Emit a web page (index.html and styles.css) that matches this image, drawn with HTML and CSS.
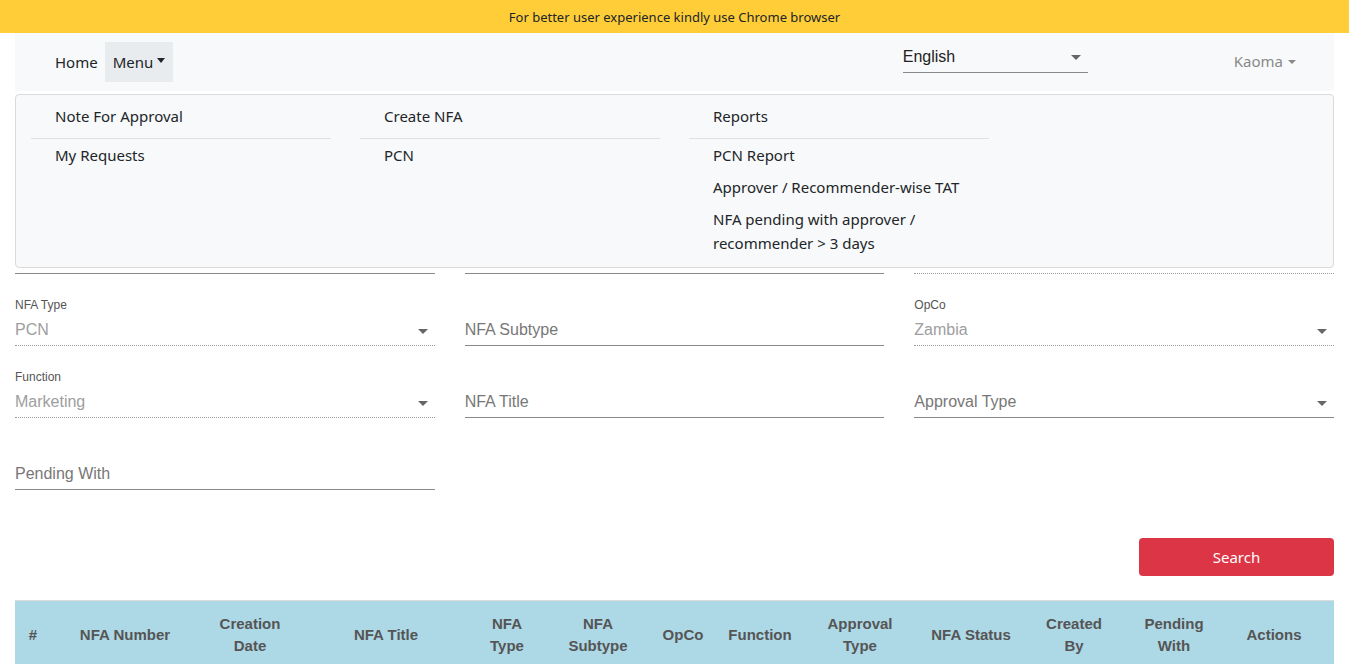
FILE: index.html
```html
<!DOCTYPE html>
<html lang="en">
<head>
<meta charset="utf-8">
<title>NFA</title>
<link rel="stylesheet" href="styles.css">
</head>
<body>
<div class="viewport">
<div class="banner">For better user experience kindly use Chrome browser</div>
<div class="page">
  <header class="navbar">
    <nav class="nav">
      <a class="nav-link">Home</a>
      <a class="nav-link active">Menu<span class="caret"></span></a>
    </nav>
    <div class="nav-spacer"></div>
    <div class="lang-select">
      <span>English</span>
      <span class="arrow"></span>
    </div>
    <div class="user">Kaoma<span class="caret small"></span></div>
    <div class="mega-menu">
      <div class="mega-col">
        <div class="mega-item">Note For Approval</div>
        <div class="mega-divider"></div>
        <div class="mega-item">My Requests</div>
      </div>
      <div class="mega-col">
        <div class="mega-item">Create NFA</div>
        <div class="mega-divider"></div>
        <div class="mega-item">PCN</div>
      </div>
      <div class="mega-col">
        <div class="mega-item">Reports</div>
        <div class="mega-divider"></div>
        <div class="mega-item">PCN Report</div>
        <div class="mega-item">Approver / Recommender-wise TAT</div>
        <div class="mega-item">NFA pending with approver / recommender &gt; 3 days</div>
      </div>
    </div>
  </header>

  <div class="section-head"></div>

  <form class="form-grid">
    <div class="field"><label class="field-label"></label><div class="input">NFA Number</div></div>
    <div class="field"><label class="field-label"></label><div class="input">Created By</div></div>
    <div class="field disabled"><label class="field-label">Status</label><div class="input">All</div><span class="arrow"></span></div>

    <div class="field disabled"><label class="field-label">NFA Type</label><div class="input">PCN</div><span class="arrow"></span></div>
    <div class="field"><label class="field-label"></label><div class="input">NFA Subtype</div></div>
    <div class="field disabled"><label class="field-label">OpCo</label><div class="input">Zambia</div><span class="arrow"></span></div>

    <div class="field disabled"><label class="field-label">Function</label><div class="input">Marketing</div><span class="arrow"></span></div>
    <div class="field"><label class="field-label"></label><div class="input">NFA Title</div></div>
    <div class="field"><label class="field-label"></label><div class="input">Approval Type</div><span class="arrow"></span></div>

    <div class="field"><label class="field-label"></label><div class="input">Pending With</div></div>
  </form>

  <div class="actions-row">
    <button class="btn-search" type="button">Search</button>
  </div>

  <table class="results">
    <thead>
      <tr>
        <th class="c-idx">#</th>
        <th class="c-num">NFA Number</th>
        <th class="c-date">Creation<br>Date</th>
        <th class="c-title">NFA Title</th>
        <th class="c-type">NFA<br>Type</th>
        <th class="c-sub">NFA<br>Subtype</th>
        <th class="c-opco">OpCo</th>
        <th class="c-func">Function</th>
        <th class="c-appr">Approval<br>Type</th>
        <th class="c-status">NFA Status</th>
        <th class="c-by">Created<br>By</th>
        <th class="c-pend">Pending<br>With</th>
        <th class="c-act">Actions</th>
      </tr>
    </thead>
  </table>
</div>
</div>
</body>
</html>
```
FILE: styles.css
```css
* { box-sizing: border-box; }
html, body { margin: 0; padding: 0; }
body {
  font-family: "Noto Sans", "Open Sans", sans-serif;
  color: #212529;
  background: #fff;
  overflow: hidden;
}
.viewport { width: 1349px; }

.banner {
  height: 33px;
  line-height: 34px;
  background: #ffcd38;
  text-align: center;
  font-size: 13px;
  color: #212529;
}

.page { padding: 0 15px; }

.navbar {
  position: relative;
  height: 58px;
  background: #f8f9fa;
  display: flex;
  align-items: center;
  padding: 0 38px 0 32px;
  font-size: 15px;
}
.nav { display: flex; align-items: center; }
.nav-link {
  display: flex;
  align-items: center;
  height: 40px;
  padding: 0 8px;
  color: #212529;
}
.nav-link.active { background: #e9ecef; margin-left: -1px; }
.caret {
  display: inline-block;
  width: 0; height: 0;
  margin-left: 4px;
  border-left: 4px solid transparent;
  border-right: 4px solid transparent;
  border-top: 5px solid #212529;
  position: relative;
  top: -2px;
}
.caret.small { border-top-color: #888; border-top-width: 4px; top: 1px; margin-left: 5px; }
.nav-spacer { flex: 1; }

.lang-select {
  width: 185px;
  height: 33px;
  border-bottom: 1px solid #888;
  font-family: "Liberation Sans", Arial, sans-serif;
  font-size: 16px;
  color: #222;
  display: flex;
  justify-content: space-between;
  align-items: flex-start;
  padding-top: 8px;
  margin-top: -11px;
}
.lang-select .arrow { margin-top: 7px; margin-right: 7px; }

.arrow {
  display: inline-block;
  width: 0; height: 0;
  border-left: 5px solid transparent;
  border-right: 5px solid transparent;
  border-top: 5px solid #666;
}

.user {
  margin-left: 146px;
  color: #888;
  font-size: 15px;
  display: flex;
  align-items: center;
  margin-top: -2px;
}

.mega-menu {
  position: absolute;
  left: 0; right: 0;
  top: 61px;
  height: 174px;
  background: #f8f9fa;
  border: 1px solid #dadada;
  border-radius: 4px;
  z-index: 10;
  display: grid;
  grid-template-columns: 300px 300px 300px;
  column-gap: 29px;
  padding: 5px 15px 8px 15px;
  font-size: 15px;
}
.mega-item {
  padding: 4px 24px;
  line-height: 24px;
  color: #212529;
}
.mega-divider {
  border-top: 1px solid #dee2e6;
  margin-top: 6px;
}

.section-head {
  height: 110px;
  border-bottom: 1px solid #555;
  margin-bottom: 1px;
}

.form-grid {
  display: grid;
  grid-template-columns: repeat(3, 1fr);
  column-gap: 30px;
  font-family: "Liberation Sans", Arial, sans-serif;
}
.field {
  position: relative;
  height: 72px;
  padding-top: 25px;
}
.field-label {
  display: block;
  height: 13px;
  line-height: 13px;
  font-size: 12px;
  color: #555;
}
.input {
  height: 34px;
  padding-top: 3px;
  line-height: 30px;
  font-size: 16px;
  color: #777;
  border-bottom: 1px solid #8a8a8a;
}
.field.disabled .input {
  color: #9e9e9e;
  border-bottom: 1px dotted #999;
}
.field .arrow {
  position: absolute;
  right: 7px;
  top: 55px;
}

.actions-row {
  display: flex;
  justify-content: flex-end;
  margin-top: 48px;
}
.btn-search {
  width: 195px;
  height: 38px;
  background: #dc3545;
  color: #fff;
  border: none;
  border-radius: 4px;
  font-family: "Noto Sans", "Open Sans", sans-serif;
  font-size: 15px;
}

.results {
  width: 100%;
  margin-top: 24px;
  border-collapse: collapse;
  table-layout: fixed;
  font-family: "Liberation Sans", Arial, sans-serif;
}
.results th {
  background: #add8e6;
  border-top: 1px solid #ddd;
  color: #555;
  font-size: 15px;
  font-weight: bold;
  line-height: 22px;
  padding: 12px 4px;
  text-align: center;
  vertical-align: middle;
}
.c-idx { width: 36px; }
.c-num { width: 148px; }
.c-date { width: 102px; }
.c-title { width: 170px; }
.c-type { width: 72px; }
.c-sub { width: 110px; }
.c-opco { width: 60px; }
.c-func { width: 94px; }
.c-appr { width: 106px; }
.c-status { width: 116px; }
.c-by { width: 90px; }
.c-pend { width: 110px; }
.results th.c-act { padding-right: 19px; }
```
